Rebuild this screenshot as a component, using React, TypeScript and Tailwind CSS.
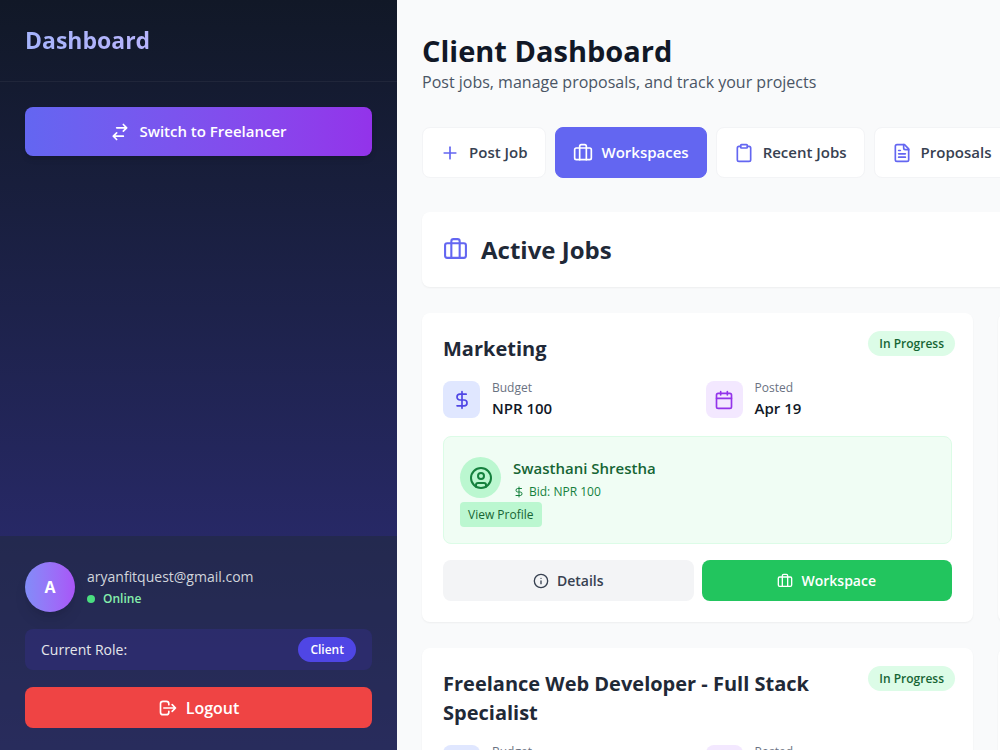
import React from 'react';
import { HiOutlineLogout, HiOutlineSwitchHorizontal } from 'react-icons/hi';
import {
    LuBriefcase,
    LuCalendar,
    LuCircleUser,
    LuClipboard,
    LuDollarSign,
    LuFileText,
    LuInfo,
    LuPlus,
} from 'react-icons/lu';

interface Job {
    title: string;
    budget: string;
    posted: string;
    freelancer: string;
    bid: string;
}

const jobs: Job[] = [
    { title: 'Marketing', budget: 'NPR 100', posted: 'Apr 19', freelancer: 'Swasthani Shrestha', bid: 'NPR 100' },
    {
        title: 'Freelance Web Developer - Full Stack Specialist',
        budget: 'NPR 100',
        posted: 'Apr 19',
        freelancer: 'Swasthani Shrestha',
        bid: 'NPR 100',
    },
];

const tabs = [
    { label: 'Post Job', icon: LuPlus },
    { label: 'Workspaces', icon: LuBriefcase },
    { label: 'Recent Jobs', icon: LuClipboard },
    { label: 'Proposals', icon: LuFileText },
];

function Sidebar() {
    return (
        <aside className="flex h-full w-[397px] shrink-0 flex-col bg-linear-to-b from-[#111827] to-[#312e81] text-white">
            <div className="border-b border-white/5 px-[25px] py-6">
                <h2 className="bg-linear-to-r from-[#a5b4fc] to-[#d8b4fe] bg-clip-text text-[23px] leading-[33px] font-bold text-transparent">
                    Dashboard
                </h2>
            </div>

            <div className="flex-1 p-[25px]">
                <button className="flex h-[49px] w-full items-center justify-center gap-[9px] rounded-lg bg-linear-to-r from-[#6366f1] to-[#9333ea] text-[15px] font-semibold shadow-md">
                    <HiOutlineSwitchHorizontal className="size-5" />
                    Switch to Freelancer
                </button>
            </div>

            <div className="flex flex-col gap-[17px] bg-[#1f2937]/50 px-[25px] pt-[26px] pb-[22px]">
                <div className="flex items-center gap-3">
                    <div className="flex size-[50px] items-center justify-center rounded-full bg-linear-to-r from-[#818cf8] to-[#a855f7] text-[16px] font-bold shadow-lg">
                        A
                    </div>
                    <div>
                        <p className="text-[14px] leading-6 text-gray-300">aryanfitquest@gmail.com</p>
                        <p className="flex items-center gap-2 text-[12px] leading-5 font-semibold text-[#86efac]">
                            <span className="size-2 rounded-full bg-[#4ade80]" />
                            Online
                        </p>
                    </div>
                </div>
                <div className="flex h-[41px] items-center justify-between rounded-lg bg-[#312e81]/50 px-4">
                    <span className="text-[14px] text-gray-200">Current Role:</span>
                    <span className="flex h-[25px] items-center rounded-full bg-[#4f46e5] px-3 text-[12px] font-semibold">
                        Client
                    </span>
                </div>
                <button className="flex h-[41px] w-full items-center justify-center gap-2 rounded-lg bg-[#ef4444] text-[16px] font-semibold">
                    <HiOutlineLogout className="size-5" />
                    Logout
                </button>
            </div>
        </aside>
    );
}

function JobCard({ job }: { job: Job }) {
    return (
        <article className="relative rounded-lg bg-white p-[21px] shadow-xs">
            <span className="absolute top-[18px] right-[18px] flex h-[25px] items-center rounded-full bg-[#dcfce7] px-[11px] text-[12px] font-semibold text-[#166534]">
                In Progress
            </span>
            <h3 className="pr-28 text-[20px] leading-[29px] font-bold text-[#1f2937]">{job.title}</h3>

            <div className="mt-4 grid grid-cols-2 gap-4">
                <div className="flex items-center gap-3">
                    <div className="flex size-[37px] items-center justify-center rounded-lg bg-[#e0e7ff] text-[#4f46e5]">
                        <LuDollarSign className="size-5" />
                    </div>
                    <div>
                        <p className="text-[12px] leading-[17px] text-gray-500">Budget</p>
                        <p className="text-[15px] leading-6 font-semibold text-[#111827]">{job.budget}</p>
                    </div>
                </div>
                <div className="flex items-center gap-3">
                    <div className="flex size-[37px] items-center justify-center rounded-lg bg-[#f3e8ff] text-[#9333ea]">
                        <LuCalendar className="size-5" />
                    </div>
                    <div>
                        <p className="text-[12px] leading-[17px] text-gray-500">Posted</p>
                        <p className="text-[15px] leading-6 font-semibold text-[#111827]">{job.posted}</p>
                    </div>
                </div>
            </div>

            <div className="mt-4 rounded-lg border border-[#dcfce7] bg-[#f0fdf4] p-4">
                <div className="flex h-[49px] items-center gap-3">
                    <div className="flex size-[41px] items-center justify-center rounded-full bg-[#bbf7d0] text-[#15803d]">
                        <LuCircleUser className="size-6" />
                    </div>
                    <div className="pt-1">
                        <p className="text-[15px] leading-6 font-semibold text-[#166534]">{job.freelancer}</p>
                        <p className="flex items-center gap-1 text-[12px] leading-6 text-[#15803d]">
                            <LuDollarSign className="size-3" />
                            Bid: {job.bid}
                        </p>
                    </div>
                </div>
                <button className="block h-[25px] rounded-sm bg-[#bbf7d0] px-2 text-[12px] text-[#166534]">
                    View Profile
                </button>
            </div>

            <div className="mt-4 grid grid-cols-2 gap-2">
                <button className="flex h-[41px] items-center justify-center gap-2 rounded-lg bg-gray-100 text-[14px] font-semibold text-[#374151]">
                    <LuInfo className="size-4" />
                    Details
                </button>
                <button className="flex h-[41px] items-center justify-center gap-2 rounded-lg bg-[#22c55e] text-[14px] font-semibold text-white">
                    <LuBriefcase className="size-4" />
                    Workspace
                </button>
            </div>
        </article>
    );
}

export default function App() {
    const active = 'Workspaces';

    return (
        <div className="flex h-screen overflow-hidden bg-[#f9fafb] font-['Open_Sans',sans-serif]">
            <Sidebar />

            <main className="flex-1 overflow-hidden">
                <div className="min-w-[1177px] px-[25px] pt-8">
                    <h1 className="text-[29px] leading-[38px] font-bold text-[#111827]">Client Dashboard</h1>
                    <p className="text-[16px] leading-6 text-gray-600">
                        Post jobs, manage proposals, and track your projects
                    </p>

                    <nav className="mt-[33px] flex gap-[9px]">
                        {tabs.map(({ label, icon: Icon }) => (
                            <button
                                key={label}
                                className={
                                    'flex h-[51px] items-center gap-[9px] rounded-lg border px-[17px] text-[15px] font-semibold ' +
                                    (label === active
                                        ? 'border-[#6366f1] bg-[#6366f1] text-white'
                                        : 'border-gray-100 bg-white text-[#374151]')
                                }
                            >
                                <Icon className={label === active ? 'size-5' : 'size-5 text-[#6366f1]'} />
                                {label}
                            </button>
                        ))}
                    </nav>

                    <div className="mt-[34px] flex h-[75px] items-center gap-[13px] rounded-lg bg-white px-[21px] shadow-xs">
                        <LuBriefcase className="size-[25px] text-[#6366f1]" />
                        <h2 className="text-[24px] font-bold text-[#1f2937]">Active Jobs</h2>
                    </div>

                    <div className="mt-[26px] grid grid-cols-2 gap-x-[25px] gap-y-[26px]">
                        {jobs.map((job) => (
                            <React.Fragment key={job.title}>
                                <JobCard job={job} />
                                <div className="rounded-lg bg-white shadow-xs" />
                            </React.Fragment>
                        ))}
                    </div>
                </div>
            </main>
        </div>
    );
}
